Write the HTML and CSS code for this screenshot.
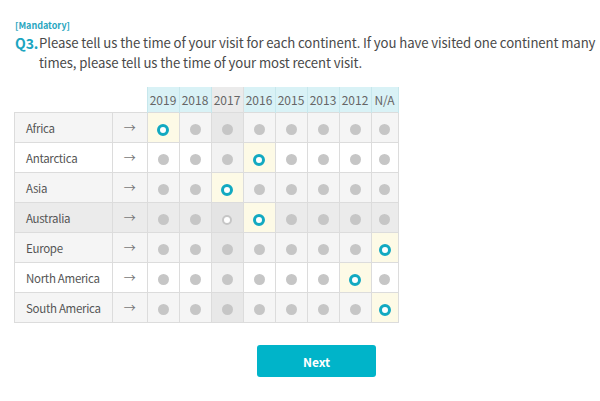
FILE: index.html
```html
<!DOCTYPE html>
<html>
<head>
<meta charset="utf-8">
<link rel="stylesheet" href="styles.css">
</head>
<body>
<div class="page">
  <div class="mandatory">[Mandatory]</div>
  <div class="question">
    <span class="qnum">Q3.</span>
    <span class="qtext">Please tell us the time of your visit for each continent. If you have visited one continent many times, please tell us the time of your most recent visit.</span>
  </div>
  <table class="grid">
    <thead>
      <tr>
        <th class="blank label-col"></th>
        <th class="blank arrow-col"></th>
        <th class="yr">2019</th>
        <th class="yr">2018</th>
        <th class="yr hcol">2017</th>
        <th class="yr">2016</th>
        <th class="yr">2015</th>
        <th class="yr">2013</th>
        <th class="yr">2012</th>
        <th class="yr na">N/A</th>
      </tr>
    </thead>
    <tbody>
      <tr class="alt">
        <td class="label">Africa</td><td class="arrow">→</td>
        <td class="sel"><span class="radio on"></span></td>
        <td><span class="radio"></span></td>
        <td class="hcol"><span class="radio"></span></td>
        <td><span class="radio"></span></td>
        <td><span class="radio"></span></td>
        <td><span class="radio"></span></td>
        <td><span class="radio"></span></td>
        <td><span class="radio"></span></td>
      </tr>
      <tr>
        <td class="label">Antarctica</td><td class="arrow">→</td>
        <td><span class="radio"></span></td>
        <td><span class="radio"></span></td>
        <td class="hcol"><span class="radio"></span></td>
        <td class="sel"><span class="radio on"></span></td>
        <td><span class="radio"></span></td>
        <td><span class="radio"></span></td>
        <td><span class="radio"></span></td>
        <td><span class="radio"></span></td>
      </tr>
      <tr class="alt">
        <td class="label">Asia</td><td class="arrow">→</td>
        <td><span class="radio"></span></td>
        <td><span class="radio"></span></td>
        <td class="sel"><span class="radio on"></span></td>
        <td><span class="radio"></span></td>
        <td><span class="radio"></span></td>
        <td><span class="radio"></span></td>
        <td><span class="radio"></span></td>
        <td><span class="radio"></span></td>
      </tr>
      <tr class="hover">
        <td class="label">Australia</td><td class="arrow">→</td>
        <td><span class="radio"></span></td>
        <td><span class="radio"></span></td>
        <td class="hcol"><span class="radio hov"></span></td>
        <td class="sel"><span class="radio on"></span></td>
        <td><span class="radio"></span></td>
        <td><span class="radio"></span></td>
        <td><span class="radio"></span></td>
        <td><span class="radio"></span></td>
      </tr>
      <tr class="alt">
        <td class="label">Europe</td><td class="arrow">→</td>
        <td><span class="radio"></span></td>
        <td><span class="radio"></span></td>
        <td class="hcol"><span class="radio"></span></td>
        <td><span class="radio"></span></td>
        <td><span class="radio"></span></td>
        <td><span class="radio"></span></td>
        <td><span class="radio"></span></td>
        <td class="sel"><span class="radio on"></span></td>
      </tr>
      <tr>
        <td class="label">North America</td><td class="arrow">→</td>
        <td><span class="radio"></span></td>
        <td><span class="radio"></span></td>
        <td class="hcol"><span class="radio"></span></td>
        <td><span class="radio"></span></td>
        <td><span class="radio"></span></td>
        <td><span class="radio"></span></td>
        <td class="sel"><span class="radio on"></span></td>
        <td><span class="radio"></span></td>
      </tr>
      <tr class="alt">
        <td class="label">South America</td><td class="arrow">→</td>
        <td><span class="radio"></span></td>
        <td><span class="radio"></span></td>
        <td class="hcol"><span class="radio"></span></td>
        <td><span class="radio"></span></td>
        <td><span class="radio"></span></td>
        <td><span class="radio"></span></td>
        <td><span class="radio"></span></td>
        <td class="sel"><span class="radio on"></span></td>
      </tr>
    </tbody>
  </table>
  <div class="actions">
    <button class="next">Next</button>
  </div>
</div>
</body>
</html>
```

FILE: styles.css
```css
html, body {
  margin: 0;
  padding: 0;
  background: #ffffff;
}
body {
  font-family: "Noto Sans CJK JP", "Noto Sans", sans-serif;
  color: #444444;
}
.page {
  padding: 19px 0 0 15px;
}
.mandatory {
  font-size: 9px;
  line-height: 13px;
  font-weight: 700;
  color: #2aa6bf;
}
.question {
  display: flex;
  margin-top: 1px;
  font-size: 13.2px;
  letter-spacing: -0.1px;
  line-height: 20px;
  width: 585px;
}
.qnum {
  flex: 0 0 24px;
  font-size: 14px;
  font-weight: 700;
  color: #1ba5c0;
}
.qtext {
  color: #4a4a4a;
}
.grid {
  margin-top: 14px;
  margin-left: -1px;
  border-collapse: collapse;
  font-size: 12px;
  color: #555555;
}
.grid th, .grid td {
  padding: 0;
  text-align: center;
}
.grid thead th {
  height: 25px;
  font-weight: 400;
  font-size: 12px;
  color: #666666;
}
.grid th.blank {
  background: transparent;
}
.label-col { width: 98px; }
.arrow-col { width: 34px; }
.grid th.yr {
  width: 31px;
  background: #d9f2f6;
  border-left: 1px solid #c7e7ec;
  border-right: 1px solid #c7e7ec;
}
.grid th.na { width: 26px; }
.grid th.hcol {
  background: #ebebeb;
  border-color: #dedede;
}
.grid tbody tr {
  background: #ffffff;
}
.grid tbody tr.alt {
  background: #f5f5f5;
}
.grid tbody tr.hover {
  background: #ebebeb;
}
.grid td {
  height: 29px;
  border: 1px solid #dcdcdc;
}
.grid td.label {
  text-align: left;
  padding-left: 11px;
  font-size: 11.5px;
  letter-spacing: -0.3px;
  color: #555555;
}
.grid td.arrow {
  color: #777777;
  font-size: 12px;
}
.grid td.hcol {
  background: rgba(0, 0, 0, 0.05);
}
.grid tr.hover td.hcol {
  background: #e4e4e4;
}
.grid td.sel {
  background: #fdfae6;
}
.radio {
  display: inline-block;
  width: 11px;
  height: 11px;
  border-radius: 50%;
  background: #c6c6c6;
  vertical-align: middle;
  box-sizing: border-box;
}
.radio.on {
  width: 12px;
  height: 12px;
  background: #ffffff;
  border: 3px solid #12a9c1;
}
.radio.hov {
  width: 10px;
  height: 10px;
  background: #ffffff;
  border: 2.5px solid #c6c6c6;
}
.actions {
  margin-top: 22px;
  padding-left: 242px;
}
.next {
  width: 119px;
  height: 32px;
  border: none;
  border-radius: 3px;
  background: #00b4c9;
  color: #ffffff;
  font-family: "Noto Sans CJK JP", "Noto Sans", sans-serif;
  font-size: 12px;
  font-weight: 700;
  padding: 0;
}
```
